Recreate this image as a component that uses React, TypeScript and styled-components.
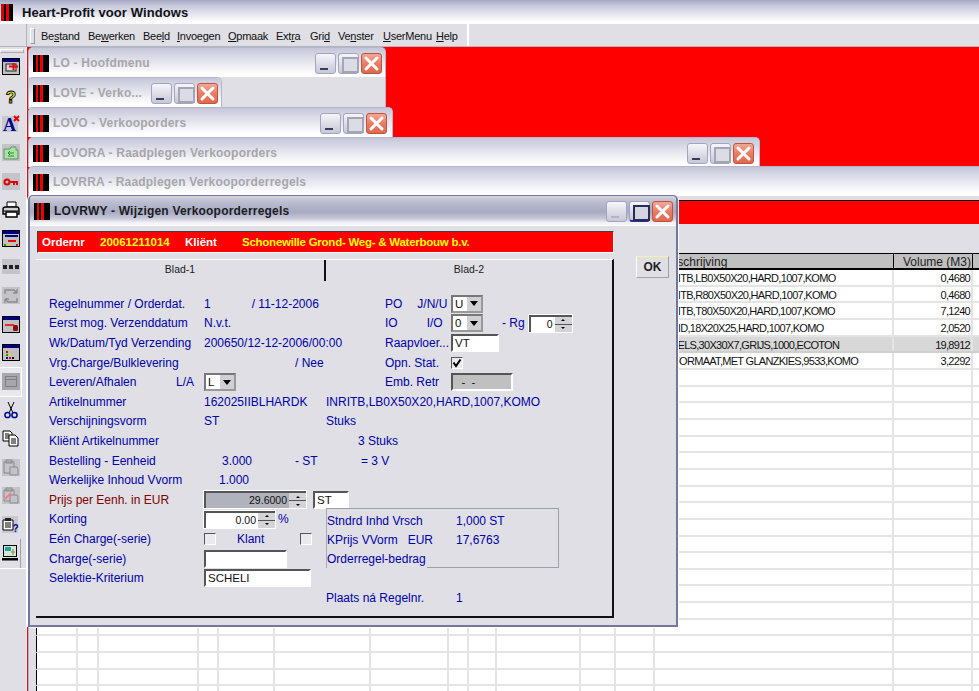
import React from "react";
import styled, { createGlobalStyle, css } from "styled-components";

const GlobalStyle = createGlobalStyle`
  html, body {
    margin: 0;
    padding: 0;
    overflow: hidden;
    background: #dfdfe5;
  }
  * {
    box-sizing: border-box;
  }
`;

const FONT = `"Liberation Sans", Arial, sans-serif`;
const PANEL = "#dfdfe5";
const BLUE = "#0000a8";

const Screen = styled.div`
  width: 979px;
  height: 691px;
  display: flex;
  flex-direction: column;
  overflow: hidden;
  font-family: ${FONT};
  font-size: 12px;
  background: ${PANEL};
`;

/* ---- application chrome ---- */

const AppTitle = styled.div`
  height: 24px;
  display: flex;
  align-items: center;
  gap: 9px;
  padding: 0 0 0 1px;
  font-size: 13px;
  font-weight: bold;
  letter-spacing: 0.1px;
  color: #101018;
  background: linear-gradient(#a6a8c4 0, #c9cadb 6px, #eeeef4 17px, #ffffff 22px);
`;

const AppLogo = styled.div`
  width: 12px;
  height: 17px;
  background: linear-gradient(
    90deg,
    #d00 0 3px,
    #000 3px 5px,
    #e00 5px 8px,
    #000 8px
  );
`;

const MenuRow = styled.div`
  height: 23px;
  display: flex;
  background: ${PANEL};
  border-bottom: 1px solid #b4b4bc;
`;

const MenuBar = styled.div`
  margin-left: 26px;
  width: 443px;
  display: flex;
  align-items: center;
  padding: 1px 0 0 14px;
  position: relative;
  border-left: 1px solid #b0b0b8;
  border-right: 2px solid #fff;
  &::before {
    content: "";
    position: absolute;
    left: 3px;
    top: 4px;
    width: 3px;
    height: 14px;
    border: 1px solid #fff;
    border-right-color: #9a9aa4;
    border-bottom-color: #9a9aa4;
  }
`;

const MenuItem = styled.span<{ $w: number }>`
  width: ${({ $w }) => $w}px;
  font-size: 11px;
  letter-spacing: -0.25px;
  color: #101010;
  white-space: nowrap;
`;

const Workspace = styled.div`
  flex: 1;
  display: flex;
  min-height: 0;
`;

const ToolStrip = styled.div`
  width: 26px;
  flex-shrink: 0;
  display: flex;
  flex-direction: column;
  padding-top: 2px;
  background: ${PANEL};
`;

const ToolRule = styled.div`
  height: 4px;
  flex-shrink: 0;
  margin-right: 2px;
  border: 1px solid #fff;
  border-right-color: #a8a8b0;
  border-bottom-color: #a8a8b0;
`;

const ToolSlots = styled.div`
  width: 26px;
  flex-shrink: 0;
  display: flex;
  flex-direction: column;
  align-items: flex-start;
  border-bottom: 1px solid #fff;
`;

const ToolSlot = styled.div<{ $pressed?: boolean; $edge?: boolean }>`
  height: 28.6px;
  width: 21px;
  flex-shrink: 0;
  display: flex;
  align-items: center;
  justify-content: center;
  ${({ $pressed }) =>
    $pressed &&
    css`
      outline: 1px solid #fff;
      background: #e8e8ee;
    `}
  ${({ $edge }) => $edge && "border-right: 1px solid #a0a0a8;"}
`;

const Mdi = styled.div`
  flex: 1;
  position: relative;
  background: #ff0000;
  overflow: hidden;
  border-left: 1px solid #fff;
`;

/* ---- mdi windows ---- */

const MdiWindow = styled.div<{ $left: number; $top: number; $w: number; $h: number }>`
  position: absolute;
  left: ${({ $left }) => $left}px;
  top: ${({ $top }) => $top}px;
  width: ${({ $w }) => $w}px;
  height: ${({ $h }) => $h}px;
  display: flex;
  flex-direction: column;
  background: ${PANEL};
  border: 1px solid #b4b6cf;
  border-bottom: none;
  border-radius: 5px 5px 0 0;
`;

const WindowTitle = styled.div<{ $active?: boolean; $endGap?: number }>`
  height: 29px;
  flex-shrink: 0;
  display: flex;
  align-items: center;
  gap: 4px;
  padding: 1px ${({ $endGap }) => $endGap ?? 3}px 0 4px;
  border-radius: 5px 5px 0 0;
  font-size: 12px;
  font-weight: bold;
  letter-spacing: 0.2px;
  color: ${({ $active }) => ($active ? "#1c1c24" : "#a6a6aa")};
  background: ${({ $active }) =>
    $active
      ? "linear-gradient(#d4d4e0 0, #bcbdd0 6px, #a8aac2 16px, #c4c5d6 22px, #f4f4f8 27px)"
      : "linear-gradient(#c4c5d8 0, #d8d9e5 8px, #eeeef4 18px, #ffffff 26px)"};
`;

const WindowLogo = styled.div`
  width: 16px;
  height: 17px;
  flex-shrink: 0;
  background: linear-gradient(
    90deg,
    #000 0 3px,
    #e00 3px 5px,
    #000 5px 7px,
    #e00 7px 10px,
    #000 10px
  );
`;

const TitleText = styled.span`
  flex: 1;
  min-width: 0;
  white-space: nowrap;
  overflow: hidden;
`;

const WinButtons = styled.div`
  display: flex;
  gap: 2px;
  flex-shrink: 0;
`;

const WinButton = styled.div<{ $kind: "min" | "max" | "close"; $active?: boolean }>`
  width: 21px;
  height: 21px;
  border-radius: 3px;
  position: relative;
  border: 1px solid ${({ $kind }) => ($kind === "close" ? "#c2523c" : "#a2a5c2")};
  background: ${({ $kind }) =>
    $kind === "close"
      ? "linear-gradient(#f0a898, #e87a62 55%, #dc6a50)"
      : "linear-gradient(#f6f6fa, #d8d9e4 60%, #c8c9d8)"};
  ${({ $kind, $active }) =>
    $kind === "min" &&
    css`
      &::after {
        content: "";
        position: absolute;
        left: 4px;
        bottom: 3px;
        width: 8px;
        height: 2px;
        background: ${$active ? "#b4b4c0" : "#3a3a5c"};
      }
    `}
  ${({ $kind, $active }) =>
    $kind === "max" &&
    css`
      ${$active ? "border-bottom: 2px solid #2a2ea0;" : ""}
      &::after {
        content: "";
        position: absolute;
        left: 3px;
        top: 3px;
        width: 13px;
        height: 12px;
        border: 2px solid ${$active ? "#2c2c50" : "#a4a6b6"};
        background: ${$active ? "#d4d5e2" : "#dcdce6"};
      }
    `}
`;

const CloseCross: React.FC = () => (
  <svg width="19" height="19" viewBox="0 0 19 19">
    <path d="M4 4 L15 15 M15 4 L4 15" stroke="#fff" strokeWidth="3" strokeLinecap="round" />
  </svg>
);

const Buttons: React.FC<{ active?: boolean }> = ({ active }) => (
  <WinButtons>
    <WinButton $kind="min" $active={active} />
    <WinButton $kind="max" $active={active} />
    <WinButton $kind="close">
      <CloseCross />
    </WinButton>
  </WinButtons>
);

/* ---- the grid in the window behind the dialog ---- */

const RedBanner = styled.div`
  height: 24px;
  margin-top: 4px;
  flex-shrink: 0;
  background: #ff0000;
  border-top: 1px solid #000;
`;

const GridArea = styled.div`
  flex: 1;
  padding: 29px 0 0 7px;
  min-height: 0;
  overflow: hidden;
`;

const COLUMNS = "41px 21px 100px 20px 56px 96px 78px 20px 28px 84px 35px 39px 239px 79px 1fr";

const GridHead = styled.div`
  display: grid;
  grid-template-columns: ${COLUMNS};
  height: 17px;
  font-size: 12px;
  color: #1c1c1c;
  background: #c0c0c0;
  border: solid #000;
  border-width: 1px 0 2px 1px;
`;

const GridRow = styled.div<{ $shade?: boolean }>`
  display: grid;
  grid-template-columns: ${COLUMNS};
  height: 16.67px;
  font-size: 11px;
  letter-spacing: -0.7px;
  color: #111;
  background: ${({ $shade }) => ($shade ? "#d8d8d8" : "#fff")};
  border-left: 1px solid #000;
  border-bottom: 2px solid ${({ $shade }) => ($shade ? "#cfcfcf" : "#e4e4e4")};
`;

const GridCell = styled.div<{ $right?: boolean; $head?: boolean; $indent?: number }>`
  min-width: 0;
  padding: 0 ${({ $right }) => ($right ? 1 : 3)}px 0 ${({ $indent }) => $indent ?? 3}px;
  line-height: 16px;
  white-space: nowrap;
  overflow: hidden;
  text-align: ${({ $right }) => ($right ? "right" : "left")};
  border-right: ${({ $head }) => ($head ? "1px solid #000" : "2px solid #e4e4e4")};
`;

const orderRows: [string, string][] = [
  ["INRITB,LB0X50X20,HARD,1007,KOMO", "0,4680"],
  ["INRITB,R80X50X20,HARD,1007,KOMO", "0,4680"],
  ["INRITB,T80X50X20,HARD,1007,KOMO", "7,1240"],
  ["INRID,18X20X25,HARD,1007,KOMO", "2,0520"],
  ["TEGELS,30X30X7,GRIJS,1000,ECOTON", "19,8912"],
  ["KLFORMAAT,MET GLANZKIES,9533,KOMO", "3,2292"],
];

const Grid: React.FC = () => {
  const blanks = Array.from({ length: 12 });
  return (
    <GridArea>
      <GridHead>
        {blanks.map((_, i) => (
          <GridCell key={i} $head />
        ))}
        <GridCell $head>Omschrijving</GridCell>
        <GridCell $head $right>Volume (M3)</GridCell>
      </GridHead>
      {Array.from({ length: 26 }).map((_, r) => (
        <GridRow key={r} $shade={r === 4}>
          {blanks.map((_, i) => (
            <GridCell key={i} />
          ))}
          <GridCell $indent={r === 4 ? 2 : 6}>{orderRows[r]?.[0]}</GridCell>
          <GridCell $right>{orderRows[r]?.[1]}</GridCell>
        </GridRow>
      ))}
    </GridArea>
  );
};

/* ---- active dialog ---- */

const Dialog = styled.div`
  position: absolute;
  left: 1px;
  top: 148px;
  width: 650px;
  height: 432px;
  display: flex;
  flex-direction: column;
  background: ${PANEL};
  border: 2px solid #74769a;
  border-top-width: 1px;
  border-radius: 5px 5px 0 0;
  box-shadow: 1px 1px 0 #fff, -1px 0 0 #fff;
`;

const DialogBody = styled.div`
  flex: 1;
  min-height: 0;
  display: flex;
  gap: 22px;
  padding: 5px 0 7px 7px;
  border-top: 1px solid #fff;
`;

const DialogMain = styled.div`
  width: 577px;
  display: flex;
  flex-direction: column;
  gap: 6px;
`;

const OrderStrip = styled.div`
  height: 22px;
  flex-shrink: 0;
  display: flex;
  align-items: center;
  padding-left: 4px;
  background: #ff0000;
  font-size: 11.5px;
  font-weight: bold;
  border: solid;
  border-color: #404040 #fff #fff #404040;
  border-width: 1px;
`;

const StripField = styled.span<{ $w: number; $yellow?: boolean; $tight?: boolean }>`
  width: ${({ $w }) => $w}px;
  white-space: nowrap;
  letter-spacing: ${({ $tight }) => ($tight ? "-0.25px" : "0")};
  color: ${({ $yellow }) => ($yellow ? "#ffff00" : "#ffffff")};
`;

const OkButton = styled.button`
  margin-top: 25px;
  width: 33px;
  height: 22px;
  padding: 0;
  background: ${PANEL};
  font-family: ${FONT};
  font-size: 12px;
  font-weight: bold;
  color: #222;
  border: 1px solid;
  border-color: #f4f4a0 #a0a0a8 #a0a0a8 #fff;
`;

const TabPanel = styled.div`
  flex: 1;
  display: flex;
  flex-direction: column;
  border-top: 1px solid #fff;
  border-right: 2px solid #111;
  border-bottom: 2px solid #111;
  margin-left: -1px;
`;

const Tabs = styled.div`
  display: flex;
  height: 21px;
  flex-shrink: 0;
`;

const Tab = styled.div<{ $front?: boolean }>`
  width: ${({ $front }) => ($front ? "290px" : "auto")};
  flex: ${({ $front }) => ($front ? "none" : "1")};
  text-align: center;
  padding-top: 3px;
  font-size: 10.5px;
  color: #1c1c1c;
  ${({ $front }) => $front && "border-right: 2px solid #111;"}
`;

const TabContent = styled.div`
  flex: 1;
  padding: 13px 0 0 13px;
  color: ${BLUE};
  font-size: 12px;
`;

const Row = styled.div`
  display: grid;
  grid-template-columns: 155px 122px 59px 66px 1fr;
  height: 19.6px;
  align-items: center;
  white-space: nowrap;
`;

const PriceRow = styled.div`
  display: grid;
  grid-template-columns: 155px 1fr;
  height: 19.6px;
  align-items: center;
  white-space: nowrap;
`;

const Cell = styled.span<{ $pad?: number; $red?: boolean }>`
  padding-left: ${({ $pad }) => $pad ?? 0}px;
  color: ${({ $red }) => ($red ? "#800000" : BLUE)};
`;

const SplitLabel = styled.span`
  display: flex;
  justify-content: space-between;
  padding-right: 10px;
`;

const CellGroup = styled.div`
  display: flex;
  align-items: center;
`;

const sunken = css`
  border: 2px solid;
  border-color: #555 #fff #fff #555;
`;

const TextField = styled.div<{ $w: number; $grey?: boolean; $h?: number }>`
  ${sunken}
  width: ${({ $w }) => $w}px;
  height: ${({ $h }) => $h ?? 18}px;
  padding-left: 2px;
  line-height: 14px;
  font-size: 11.5px;
  color: #111;
  background: ${({ $grey }) => ($grey ? "#c0c0c0" : "#fff")};
`;

const SelectBox = styled.div`
  ${sunken}
  border-color: #777 #999 #999 #777;
  width: 32px;
  height: 18px;
  display: flex;
  background: #fff;
  color: #111;
  font-size: 11.5px;
  line-height: 14px;
  padding-left: 2px;
  justify-content: space-between;
`;

const SelectArrow = styled.span`
  width: 15px;
  background: #d0d0d4;
  border-left: 1px solid #fff;
  display: flex;
  align-items: center;
  justify-content: center;
  &::after {
    content: "";
    border: 4px solid transparent;
    border-top: 5px solid #000;
    border-bottom: none;
  }
`;

const SpinBox = styled.div<{ $w: number; $grey?: boolean }>`
  ${sunken}
  border-right: 0;
  border-bottom: 0;
  width: ${({ $w }) => $w}px;
  height: 17px;
  display: flex;
  background: ${({ $grey }) => ($grey ? "#b0b2bc" : "#fff")};
  font-size: 10.5px;
  color: #111;
  outline: 1px solid #fff;
  outline-offset: 0;
`;

const SpinValue = styled.span`
  flex: 1;
  text-align: right;
  padding-right: 2px;
  line-height: 14px;
`;

const SpinButtons = styled.div`
  width: 17px;
  display: flex;
  flex-direction: column;
  gap: 1px;
  background: #555;
`;

const SpinButton = styled.span<{ $down?: boolean }>`
  flex: 1;
  background: #d4d4d8;
  display: flex;
  align-items: center;
  justify-content: center;
  &::after {
    content: "";
    border: 2px solid transparent;
    ${({ $down }) =>
      $down
        ? "border-top: 2px solid #000; border-bottom: none;"
        : "border-bottom: 2px solid #000; border-top: none;"}
  }
`;

const Spin: React.FC<{ value: string; width: number; grey?: boolean }> = ({ value, width, grey }) => (
  <SpinBox $w={width} $grey={grey}>
    <SpinValue>{value}</SpinValue>
    <SpinButtons>
      <SpinButton />
      <SpinButton $down />
    </SpinButtons>
  </SpinBox>
);

const Select: React.FC<{ value: string }> = ({ value }) => (
  <SelectBox>
    {value}
    <SelectArrow />
  </SelectBox>
);

const CheckBox = styled.div`
  width: 12px;
  height: 12px;
  flex-shrink: 0;
  border: 1px solid;
  border-color: #555 #fff #fff #555;
  background: #eaeaee;
  display: flex;
  align-items: center;
  justify-content: center;
`;

const LowerPart = styled.div`
  display: flex;
`;

const LowerLeft = styled.div`
  width: 277px;
  flex-shrink: 0;
`;

const LowerRight = styled.div`
  width: 233px;
`;

const GroupBox = styled.div`
  margin-top: -2px;
  height: 60px;
  padding-top: 3px;
  border: 1px solid #98a0a8;
  border-left-color: #a8a8b0;
`;

const GroupRow = styled.div`
  display: grid;
  grid-template-columns: 129px 1fr;
  height: 19.2px;
  align-items: center;
  white-space: nowrap;
`;

const MaskedLabel = styled.span`
  position: relative;
  width: 100px;
  height: 20px;
  line-height: 18px;
  background: ${PANEL};
`;

const PlaceRow = styled(GroupRow)`
  margin-top: 21px;
  grid-template-columns: 130px 1fr;
`;

const KlantLabel = styled.span`
  padding: 0 36px 0 21px;
`;

const Caret: React.FC = () => (
  <svg width="10" height="10" viewBox="0 0 10 10">
    <path d="M1.5 4.5 L4 8 L8.5 1.5" fill="none" stroke="#000" strokeWidth="2" />
  </svg>
);

/* ---- toolbar pictures ---- */

const Pic: React.FC<{ children: React.ReactNode }> = ({ children }) => (
  <svg width="18" height="18" viewBox="0 0 18 18">
    {children}
  </svg>
);

const WinFrame: React.FC<{ children?: React.ReactNode; bar?: string }> = ({ children, bar = "#000080" }) => (
  <>
    <rect x="0.5" y="0.5" width="17" height="16" fill="#c0c0c0" stroke="#000" />
    <rect x="1" y="1" width="16" height="3" fill={bar} />
    {children}
  </>
);

const toolIcons: { node: React.ReactNode; pressed?: boolean; edge?: boolean }[] = [
  {
    node: (
      <WinFrame>
        <rect x="4" y="6" width="10" height="7" fill="#d8d8d8" stroke="#222" />
        <path d="M7 8.5 H16 M11.5 5 V12" stroke="#e00" strokeWidth="2" />
      </WinFrame>
    ),
  },
  {
    node: (
      <text x="9" y="15.5" textAnchor="middle" fontFamily={FONT} fontWeight="bold" fontSize="17" fill="#ffff00" stroke="#000" strokeWidth="0.9">
        ?
      </text>
    ),
  },
  {
    node: (
      <>
        <rect width="16" height="16" y="1" fill="#c8c8d0" />
        <text x="7.5" y="15.5" textAnchor="middle" fontFamily={'"Liberation Serif", serif'} fontWeight="bold" fontSize="18" fill="#000090">
          A
        </text>
        <path d="M12 1 L17 6 M17 1 L12 6" stroke="#e00" strokeWidth="2" />
      </>
    ),
  },
  {
    node: (
      <>
        <rect width="18" height="17" fill="#c4c4c8" />
        <path d="M2 5 H8 L9 3 H14 V6 H16 V15 H2 Z" fill="#a0e8a0" stroke="#6a8a6a" />
        <path d="M6 9 H12 M6 12 H12 M8 7 L6 9 L8 11" stroke="#4a7a4a" fill="none" />
      </>
    ),
  },
  {
    node: (
      <>
        <rect width="18" height="17" fill="#c4c4c8" />
        <circle cx="5" cy="9" r="2.5" fill="none" stroke="#e00000" strokeWidth="2" />
        <path d="M7 9 H16 M12 9 V12 M15 9 V12" stroke="#e00000" strokeWidth="2" />
      </>
    ),
  },
  {
    node: (
      <>
        <path d="M5 1 H14 V6 H5 Z" fill="#fff" stroke="#000" />
        <path d="M1 8 Q1 6 4 6 H15 Q17 6 17 9 V13 H1 Z" fill="#d0d0d0" stroke="#000" strokeWidth="1.4" />
        <path d="M4 11 H15 V16 H4 Z" fill="#fff" stroke="#000" strokeWidth="1.4" />
        <path d="M1 10 H17" stroke="#000" />
      </>
    ),
  },
  {
    node: (
      <WinFrame>
        <rect x="3" y="5" width="13" height="2" fill="#000080" />
        <path d="M6 11 H14" stroke="#e00" strokeWidth="2" />
        <path d="M2 15 H4" stroke="#0a0" strokeWidth="2" />
        <path d="M5 15 H7" stroke="#e0e000" strokeWidth="2" />
        <path d="M14 15 H16" stroke="#e00" strokeWidth="2" />
      </WinFrame>
    ),
  },
  {
    node: (
      <>
        <rect width="18" height="15" y="1" fill="#c4c4c8" />
        <rect x="1" y="7" width="4" height="4" fill="#222" />
        <rect x="7" y="7" width="4" height="4" fill="#222" />
        <rect x="13" y="7" width="4" height="4" fill="#222" />
      </>
    ),
  },
  {
    node: (
      <>
        <rect width="18" height="17" fill="#c4c4c8" />
        <path d="M3 7 V3 H12 L15 6 M15 6 H11 M15 6 V2 M15 11 V15 H6 L3 12 M3 12 H7 M3 12 V16" fill="none" stroke="#8a8a8e" strokeWidth="1.3" />
      </>
    ),
  },
  {
    node: (
      <WinFrame>
        <path d="M3 9 H12" stroke="#e00" strokeWidth="1.5" />
        <rect x="11" y="9" width="5" height="6" rx="1.5" fill="#8a1010" />
      </WinFrame>
    ),
  },
  {
    node: (
      <WinFrame>
        <rect x="4" y="7" width="2" height="2" fill="#e00" />
        <rect x="4" y="10" width="2" height="2" fill="#0a0" />
        <rect x="7" y="10" width="2" height="2" fill="#e0e000" />
        <rect x="4" y="13" width="2" height="2" fill="#00a" />
        <rect x="7" y="13" width="2" height="2" fill="#e00" />
        <rect x="10" y="13" width="2" height="2" fill="#000" />
      </WinFrame>
    ),
  },
  {
    pressed: true,
    node: (
      <>
        <rect width="18" height="17" fill="#a8a8ac" />
        <rect x="3.5" y="3.5" width="11" height="10" fill="none" stroke="#808084" />
        <path d="M3.5 6.5 H14.5" stroke="#808084" />
      </>
    ),
  },
  {
    node: (
      <>
        <path d="M6 1 L11 12 M12 1 L7 12" stroke="#000" fill="none" />
        <circle cx="5.5" cy="14" r="2.6" fill="none" stroke="#000090" strokeWidth="1.5" />
        <circle cx="12.5" cy="14" r="2.6" fill="none" stroke="#000090" strokeWidth="1.5" />
      </>
    ),
  },
  {
    node: (
      <>
        <path d="M1 1 H8 L10 3 V11 H1 Z" fill="#fff" stroke="#000" />
        <path d="M3 4 H7 M3 6 H7 M3 8 H7" stroke="#000" />
        <path d="M7 5 H13 L16 8 V16 H7 Z" fill="#fff" stroke="#000" />
        <path d="M9 9 H14 M9 11 H14 M9 13 H14" stroke="#000" />
      </>
    ),
  },
  {
    node: (
      <>
        <rect width="18" height="17" fill="#c4c4c8" />
        <path d="M2 3 H12 V14 H2 Z" fill="none" stroke="#8a8a8e" />
        <rect x="4" y="1" width="6" height="3" fill="none" stroke="#8a8a8e" />
        <path d="M8 8 H15 L16 10 V16 H8 Z" fill="#c4c4c8" stroke="#8a8a8e" />
      </>
    ),
  },
  {
    node: (
      <>
        <rect width="18" height="17" fill="#c4c4c8" />
        <path d="M2 3 H12 V14 H2 Z" fill="none" stroke="#8a8a8e" />
        <rect x="4" y="1" width="6" height="3" fill="none" stroke="#8a8a8e" />
        <path d="M8 8 H15 L16 10 V16 H8 Z" fill="#c4c4c8" stroke="#8a8a8e" />
        <path d="M3 12 L9 6" stroke="#ff7c80" strokeWidth="2" />
      </>
    ),
  },
  {
    node: (
      <>
        <rect width="16" height="17" fill="#c8c8d0" />
        <path d="M1 4 H11 V14 H1 Z" fill="#fff" stroke="#000" />
        <rect x="3" y="2" width="6" height="3" fill="#222" />
        <path d="M3 7 H9 M3 9 H9 M3 11 H9" stroke="#000" />
        <text x="13.5" y="15.5" textAnchor="middle" fontFamily={FONT} fontWeight="bold" fontSize="10" fill="#000090">
          ?
        </text>
      </>
    ),
  },
  {
    edge: true,
    node: (
      <>
        <rect x="2.5" y="1.5" width="13" height="11" fill="#d0e8d8" stroke="#000" />
        <rect x="4" y="3" width="6" height="4" fill="#20a0a0" />
        <path d="M10 8 H14 M12 5 V11" stroke="#a08030" />
        <rect x="1" y="14" width="16" height="2.5" fill="#000" />
      </>
    ),
  },
];

const MENU: [React.ReactNode, number][] = [
  [<>Be<u>s</u>tand</>, 47],
  [<>Be<u>w</u>erken</>, 55],
  [<>Bee<u>l</u>d</>, 34],
  [<><u>I</u>nvoegen</>, 51],
  [<><u>O</u>pmaak</>, 48],
  [<>Ext<u>r</u>a</>, 34],
  [<>Gri<u>d</u></>, 28],
  [<>Ve<u>n</u>ster</>, 45],
  [<><u>U</u>serMenu</>, 53],
  [<><u>H</u>elp</>, 21],
];

const App: React.FC = () => {
  return (
    <Screen>
      <GlobalStyle />
      <AppTitle>
        <AppLogo />
        Heart-Profit voor Windows
      </AppTitle>
      <MenuRow>
        <MenuBar>
          {MENU.map(([label, w], i) => (
            <MenuItem key={i} $w={w}>{label}</MenuItem>
          ))}
        </MenuBar>
      </MenuRow>
      <Workspace>
        <ToolStrip>
          <ToolRule />
          <ToolSlots>
            {toolIcons.map((icon, i) => (
              <ToolSlot key={i} $pressed={icon.pressed} $edge={icon.edge}>
                <Pic>{icon.node}</Pic>
              </ToolSlot>
            ))}
          </ToolSlots>
        </ToolStrip>
        <Mdi>
          <MdiWindow $left={1} $top={0} $w={358} $h={62}>
            <WindowTitle>
              <WindowLogo />
              <TitleText>LO - Hoofdmenu</TitleText>
              <Buttons />
            </WindowTitle>
          </MdiWindow>
          <MdiWindow $left={1} $top={30} $w={194} $h={30}>
            <WindowTitle>
              <WindowLogo />
              <TitleText>LOVE - Verko...</TitleText>
              <Buttons />
            </WindowTitle>
          </MdiWindow>
          <MdiWindow $left={1} $top={60} $w={365} $h={30}>
            <WindowTitle $endGap={5}>
              <WindowLogo />
              <TitleText>LOVO - Verkooporders</TitleText>
              <Buttons />
            </WindowTitle>
          </MdiWindow>
          <MdiWindow $left={1} $top={90} $w={732} $h={30}>
            <WindowTitle $endGap={5}>
              <WindowLogo />
              <TitleText>LOVORA - Raadplegen Verkooporders</TitleText>
              <Buttons />
            </WindowTitle>
          </MdiWindow>
          <MdiWindow $left={1} $top={119} $w={980} $h={530}>
            <WindowTitle>
              <WindowLogo />
              <TitleText>LOVRRA - Raadplegen Verkooporderregels</TitleText>
            </WindowTitle>
            <RedBanner />
            <Grid />
          </MdiWindow>
          <Dialog>
            <WindowTitle $active>
              <WindowLogo />
              <TitleText>LOVRWY - Wijzigen Verkooporderregels</TitleText>
              <Buttons active />
            </WindowTitle>
            <DialogBody>
              <DialogMain>
                <OrderStrip>
                  <StripField $w={58}>Ordernr</StripField>
                  <StripField $w={85} $yellow>20061211014</StripField>
                  <StripField $w={57}>Kliënt</StripField>
                  <StripField $w={300} $yellow $tight>Schonewille Grond- Weg- &amp; Waterbouw b.v.</StripField>
                </OrderStrip>
                <TabPanel>
                  <Tabs>
                    <Tab $front>Blad-1</Tab>
                    <Tab>Blad-2</Tab>
                  </Tabs>
                  <TabContent>
                    <Row>
                      <Cell>Regelnummer / Orderdat.</Cell>
                      <Cell>1<Cell $pad={41}>/ 11-12-2006</Cell></Cell>
                      <span />
                      <Cell>PO<Cell $pad={15}>J/N/U</Cell></Cell>
                      <Select value="U" />
                    </Row>
                    <Row>
                      <Cell>Eerst mog. Verzenddatum</Cell>
                      <Cell>N.v.t.</Cell>
                      <span />
                      <Cell>IO<Cell $pad={29}>I/O</Cell></Cell>
                      <CellGroup>
                        <Select value="0" />
                        <Cell $pad={19}>- Rg</Cell>
                        <Cell $pad={4}><Spin value="0" width={43} /></Cell>
                      </CellGroup>
                    </Row>
                    <Row>
                      <Cell>Wk/Datum/Tyd Verzending</Cell>
                      <Cell>200650/12-12-2006/00:00</Cell>
                      <span />
                      <Cell>Raapvloer...</Cell>
                      <TextField $w={48}>VT</TextField>
                    </Row>
                    <Row>
                      <Cell>Vrg.Charge/Bulklevering</Cell>
                      <Cell $pad={91}>/ Nee</Cell>
                      <span />
                      <Cell>Opn. Stat.</Cell>
                      <CheckBox><Caret /></CheckBox>
                    </Row>
                    <Row>
                      <SplitLabel><Cell>Leveren/Afhalen</Cell><Cell>L/A</Cell></SplitLabel>
                      <Select value="L" />
                      <span />
                      <Cell>Emb. Retr</Cell>
                      <TextField $w={62} $grey>&nbsp;&nbsp;-&nbsp;&nbsp;-</TextField>
                    </Row>
                    <Row>
                      <Cell>Artikelnummer</Cell>
                      <Cell>162025IIBLHARDK</Cell>
                      <Cell>INRITB,LB0X50X20,HARD,1007,KOMO</Cell>
                    </Row>
                    <Row>
                      <Cell>Verschijningsvorm</Cell>
                      <Cell>ST</Cell>
                      <Cell>Stuks</Cell>
                    </Row>
                    <Row>
                      <Cell>Kliënt Artikelnummer</Cell>
                      <span />
                      <Cell $pad={32}>3 Stuks</Cell>
                    </Row>
                    <Row>
                      <Cell>Bestelling - Eenheid</Cell>
                      <Cell $pad={18}>3.000<Cell $pad={43}>- ST</Cell></Cell>
                      <Cell $pad={35}>= 3 V</Cell>
                    </Row>
                    <Row>
                      <Cell>Werkelijke Inhoud Vvorm</Cell>
                      <Cell $pad={15}>1.000</Cell>
                    </Row>
                    <PriceRow>
                      <Cell $red>Prijs per Eenh. in EUR</Cell>
                      <CellGroup>
                        <Spin value="29.6000" width={102} grey />
                        <Cell $pad={7}><TextField $w={36}>ST</TextField></Cell>
                      </CellGroup>
                    </PriceRow>
                    <LowerPart>
                      <LowerLeft>
                        <PriceRow>
                          <Cell>Korting</Cell>
                          <CellGroup>
                            <Spin value="0.00" width={71} />
                            <Cell $pad={3}>%</Cell>
                          </CellGroup>
                        </PriceRow>
                        <PriceRow>
                          <Cell>Eén Charge(-serie)</Cell>
                          <CellGroup>
                            <CheckBox />
                            <KlantLabel>Klant</KlantLabel>
                            <CheckBox />
                          </CellGroup>
                        </PriceRow>
                        <PriceRow>
                          <Cell>Charge(-serie)</Cell>
                          <TextField $w={83} />
                        </PriceRow>
                        <PriceRow>
                          <Cell>Selektie-Kriterium</Cell>
                          <TextField $w={107}>SCHELI</TextField>
                        </PriceRow>
                      </LowerLeft>
                      <LowerRight>
                        <GroupBox>
                          <GroupRow>
                            <Cell>Stndrd Inhd Vrsch</Cell>
                            <Cell>1,000 ST</Cell>
                          </GroupRow>
                          <GroupRow>
                            <Cell>KPrijs VVorm&nbsp;&nbsp;&nbsp;EUR</Cell>
                            <Cell>17,6763</Cell>
                          </GroupRow>
                          <GroupRow>
                            <MaskedLabel>Orderregel-bedrag</MaskedLabel>
                          </GroupRow>
                        </GroupBox>
                        <PlaceRow>
                          <Cell>Plaats ná Regelnr.</Cell>
                          <Cell>1</Cell>
                        </PlaceRow>
                      </LowerRight>
                    </LowerPart>
                  </TabContent>
                </TabPanel>
              </DialogMain>
              <OkButton>OK</OkButton>
            </DialogBody>
          </Dialog>
        </Mdi>
      </Workspace>
    </Screen>
  );
};

export default App;
